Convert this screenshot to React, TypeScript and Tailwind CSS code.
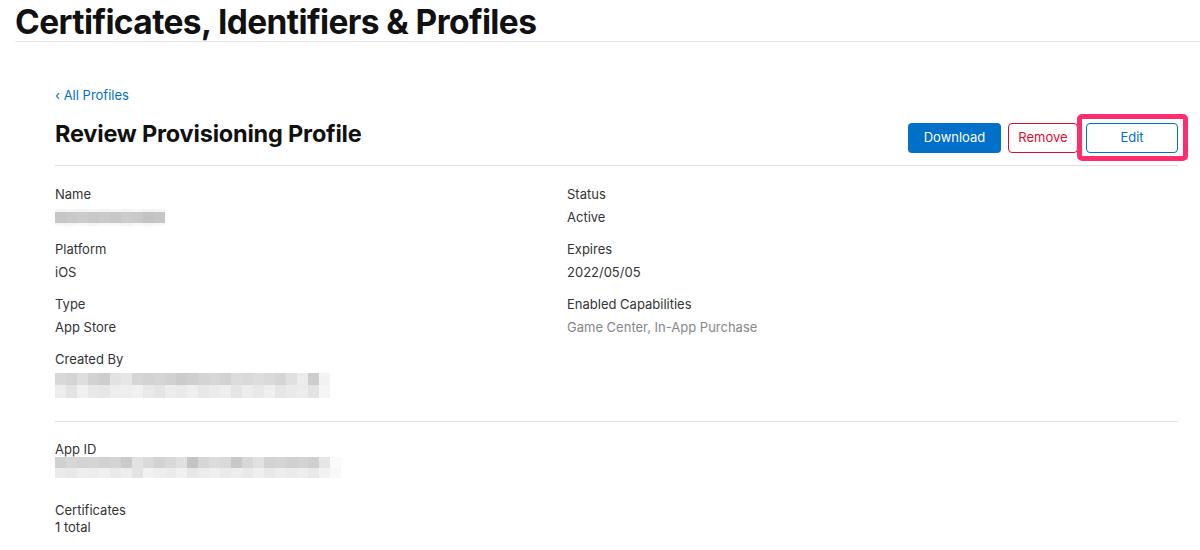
const font = { fontFamily: 'Inter, "Noto Sans", sans-serif' }

const nameTop = ['bg-[#f4f4f4]', 'bg-[#f6f6f6]', 'bg-[#f3f3f3]', 'bg-[#f5f5f5]', 'bg-[#f2f2f2]', 'bg-[#f6f6f6]', 'bg-[#f4f4f4]', 'bg-[#f7f7f7]', 'bg-[#f3f3f3]', 'bg-[#f5f5f5]']
const nameMid = ['bg-[#c6c6c6]', 'bg-[#c9c9c9]', 'bg-[#cbcbcb]', 'bg-[#c8c8c8]', 'bg-[#cacaca]', 'bg-[#c7c7c7]', 'bg-[#cccccc]', 'bg-[#c9c9c9]', 'bg-[#c3c3c3]', 'bg-[#c5c5c5]']
const nameBot = ['bg-[#f7f7f7]', 'bg-[#f5f5f5]', 'bg-[#f8f8f8]', 'bg-[#f4f4f4]', 'bg-[#f7f7f7]', 'bg-[#f6f6f6]', 'bg-[#f3f3f3]', 'bg-[#f8f8f8]', 'bg-[#f5f5f5]', 'bg-[#f7f7f7]']

const createdTop = ['bg-[#d8d8d8]', 'bg-[#d4d4d4]', 'bg-[#dedede]', 'bg-[#d2d2d2]', 'bg-[#cdcdcd]', 'bg-[#e2e2e2]', 'bg-[#e6e6e6]', 'bg-[#d6d6d6]', 'bg-[#d3d3d3]', 'bg-[#d5d5d5]', 'bg-[#d1d1d1]', 'bg-[#cbcbcb]', 'bg-[#cfcfcf]', 'bg-[#d4d4d4]', 'bg-[#d7d7d7]', 'bg-[#d2d2d2]', 'bg-[#dcdcdc]', 'bg-[#d9d9d9]', 'bg-[#dddddd]', 'bg-[#dadada]', 'bg-[#d5d5d5]', 'bg-[#e0e0e0]', 'bg-[#ebebeb]', 'bg-[#cdcdcd]', 'bg-[#f2f2f2]']
const createdBot = ['bg-[#ececec]', 'bg-[#e3e3e3]', 'bg-[#f0f0f0]', 'bg-[#e8e8e8]', 'bg-[#e6e6e6]', 'bg-[#ededed]', 'bg-[#eeeeee]', 'bg-[#f1f1f1]', 'bg-[#e9e9e9]', 'bg-[#e4e4e4]', 'bg-[#ececec]', 'bg-[#eaeaea]', 'bg-[#efefef]', 'bg-[#e7e7e7]', 'bg-[#ebebeb]', 'bg-[#eeeeee]', 'bg-[#e5e5e5]', 'bg-[#ededed]', 'bg-[#e8e8e8]', 'bg-[#efefef]', 'bg-[#e6e6e6]', 'bg-[#eaeaea]', 'bg-[#ececec]', 'bg-[#e3e3e3]', 'bg-[#f5f5f5]']

const appTop = ['bg-[#d0d0d0]', 'bg-[#d6d6d6]', 'bg-[#d3d3d3]', 'bg-[#d5d5d5]', 'bg-[#d1d1d1]', 'bg-[#d4d4d4]', 'bg-[#cacaca]', 'bg-[#e2e2e2]', 'bg-[#dadada]', 'bg-[#d2d2d2]', 'bg-[#d8d8d8]', 'bg-[#e0e0e0]', 'bg-[#c4c4c4]', 'bg-[#d6d6d6]', 'bg-[#dcdcdc]', 'bg-[#d9d9d9]', 'bg-[#c8c8c8]', 'bg-[#d7d7d7]', 'bg-[#e1e1e1]', 'bg-[#d2d2d2]', 'bg-[#d4d4d4]', 'bg-[#d0d0d0]', 'bg-[#d3d3d3]', 'bg-[#cfcfcf]', 'bg-[#e6e6e6]', 'bg-[#fafafa]']
const appBot = ['bg-[#ebebeb]', 'bg-[#e8e8e8]', 'bg-[#eeeeee]', 'bg-[#ececec]', 'bg-[#f0f0f0]', 'bg-[#e9e9e9]', 'bg-[#ededed]', 'bg-[#e3e3e3]', 'bg-[#f1f1f1]', 'bg-[#eeeeee]', 'bg-[#ebebeb]', 'bg-[#f0f0f0]', 'bg-[#e7e7e7]', 'bg-[#ececec]', 'bg-[#efefef]', 'bg-[#eaeaea]', 'bg-[#ededed]', 'bg-[#e9e9e9]', 'bg-[#efefef]', 'bg-[#e8e8e8]', 'bg-[#ededed]', 'bg-[#ebebeb]', 'bg-[#eeeeee]', 'bg-[#e9e9e9]', 'bg-[#f2f2f2]', 'bg-[#f8f8f8]']

function BlurRow({ cells, h }: { cells: string[]; h: string }) {
  return (
    <div className={`flex ${h}`}>
      {cells.map((c, i) => (
        <div key={i} className={`w-[11px] ${c}`} />
      ))}
    </div>
  )
}

function Field({
  label,
  value,
  muted,
  children,
}: {
  label: string
  value?: string
  muted?: boolean
  children?: React.ReactNode
}) {
  return (
    <div className="mb-[12px]">
      <p className="text-[13px] leading-[20px] text-[#333336]">{label}</p>
      {value && (
        <p className={`mt-[3px] text-[13px] leading-[20px] ${muted ? 'text-[#86868b]' : 'text-[#333336]'}`}>
          {value}
        </p>
      )}
      {children}
    </div>
  )
}

export default function App() {
  return (
    <div className="h-[550px] w-[1200px] overflow-hidden bg-white" style={font}>
      <div className="ml-[15px] border-b border-[#e5e5e5] pt-[3px]">
        <h1 className="text-[33.5px] leading-[38px] font-bold tracking-[-0.6px] text-[#111111]">
          Certificates, Identifiers &amp; Profiles
        </h1>
      </div>

      <div className="pr-[22px] pl-[55px]">
        <a className="mt-[44px] block text-[13px] leading-[18px] text-[#0070c9]">‹ All Profiles</a>

        <div className="mt-[11px] flex items-center justify-between border-b border-[#e0e0e0] pb-[12px]">
          <h2 className="text-[23.5px] leading-[30px] font-bold tracking-[-0.2px] text-[#111111]">
            Review Provisioning Profile
          </h2>
          <div className="mt-[8px] flex items-center gap-[7px]">
            <button className="h-[30px] w-[93px] rounded-[4px] bg-[#0070c9] text-[13px] text-white">
              Download
            </button>
            <button className="h-[30px] w-[70px] rounded-[4px] border border-[#e30b2d] text-[13px] text-[#e30b2d]">
              Remove
            </button>
            <div className="relative ml-[1px]">
              <button className="h-[30px] w-[92px] rounded-[4px] border border-[#0070c9] text-[13px] text-[#0070c9]">
                Edit
              </button>
              <div className="absolute -top-[9px] -right-[10px] -bottom-[8px] -left-[9px] rounded-[5px] border-[5px] border-[#ff2d6d]" />
            </div>
          </div>
        </div>

        <div className="grid grid-cols-[512px_1fr] pt-[18px]">
          <div>
            <Field label="Name">
              <div className="mt-[3px] flex h-[20px] flex-col justify-center">
                <BlurRow cells={nameTop} h="h-[3px]" />
                <BlurRow cells={nameMid} h="h-[11px]" />
                <BlurRow cells={nameBot} h="h-[3px]" />
              </div>
            </Field>
            <Field label="Platform" value="iOS" />
            <Field label="Type" value="App Store" />
            <Field label="Created By">
              <div className="mt-[4px]">
                <BlurRow cells={createdTop} h="h-[12px]" />
                <BlurRow cells={createdBot} h="h-[13px]" />
              </div>
            </Field>
          </div>
          <div>
            <Field label="Status" value="Active" />
            <Field label="Expires" value="2022/05/05" />
            <Field label="Enabled Capabilities" value="Game Center, In-App Purchase" muted />
          </div>
        </div>

        <div className="mt-[11px] border-t border-[#e0e0e0] pt-[17px]">
          <p className="text-[13px] leading-[20px] text-[#333336]">App ID</p>
          <div className="mt-[-2px]">
            <BlurRow cells={appTop} h="h-[11px]" />
            <BlurRow cells={appBot} h="h-[10px]" />
          </div>
          <p className="mt-[23px] text-[13px] leading-[18px] text-[#333336]">Certificates</p>
          <p className="text-[13px] leading-[17px] text-[#333336]">1 total</p>
        </div>
      </div>
    </div>
  )
}
